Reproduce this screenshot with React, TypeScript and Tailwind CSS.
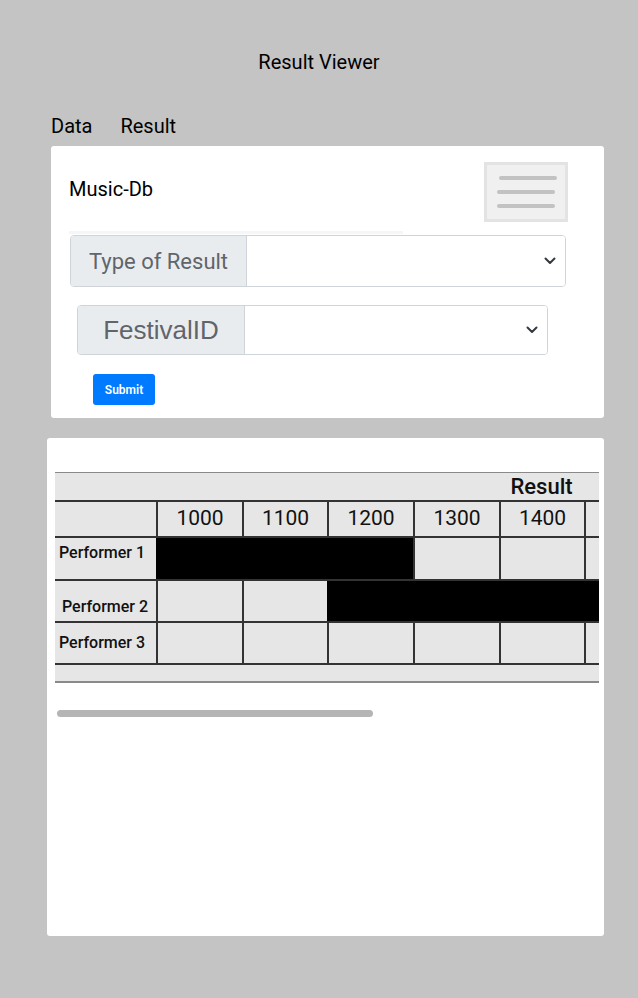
import React from "react"

const Chevron = () => (
    <svg width="12" height="8" viewBox="0 0 12 8" fill="none">
        <path d="M1.5 1.5 L6 6 L10.5 1.5" stroke="#343a40" strokeWidth="2" strokeLinecap="round" strokeLinejoin="round" />
    </svg>
)

const SelectGroup = ({ label, labelW, w, h, labelClass }: { label: string; labelW: string; w: string; h: string; labelClass: string }) => (
    <div className={`flex ${w} ${h} border border-[#ced4da] rounded-[4px] overflow-hidden`}>
        <div className={`${labelW} shrink-0 bg-[#e9ecef] border-r border-[#ced4da] flex items-center justify-center text-[#5f656b] ${labelClass}`}>
            {label}
        </div>
        <div className="flex-1 bg-white flex items-center justify-end pr-[9px]">
            <Chevron />
        </div>
    </div>
)

const Cell = ({ w, black = false, children }: { w: string; black?: boolean; children?: React.ReactNode }) => (
    <div className={`${w} shrink-0 h-full border-l-2 flex items-center justify-center ${black ? "bg-black border-black" : "border-[#333]"}`}>
        {children}
    </div>
)

export default function App() {
    const hours = ["1000", "1100", "1200", "1300", "1400", ""]
    const widths = ["w-[86px]", "w-[85px]", "w-[86px]", "w-[86px]", "w-[85px]", "w-[86px]"]

    return (
        <div className="w-[638px] h-[998px] bg-[#c4c4c4] font-['Roboto',sans-serif] text-black overflow-hidden">
            <div className="pt-[48px] h-[76px] leading-[28px] text-[20px] text-center">Result Viewer</div>

            <div className="mt-[36px] ml-[51px] flex gap-[28px] text-[20px] leading-[28px]">
                <span>Data</span>
                <span>Result</span>
            </div>

            {/* query card */}
            <div className="mt-[6px] ml-[51px] w-[553px] h-[272px] bg-white rounded-[3px]">
                <div className="pt-[16px] flex justify-between">
                    <div className="pl-[18px] pt-[16px] text-[20px] leading-[22px]">Music-Db</div>
                    <div className="mr-[36px] w-[84px] h-[60px] bg-[#f0f0f0] border-[3px] border-[#e3e3e3] flex flex-col items-center justify-center gap-[10px]">
                        <div className="w-[58px] h-[4px] rounded-full bg-[#c2c2c2] ml-[3px]" />
                        <div className="w-[58px] h-[4px] rounded-full bg-[#c2c2c2]" />
                        <div className="w-[58px] h-[4px] rounded-full bg-[#c2c2c2]" />
                    </div>
                </div>
                <div className="mt-[9px] ml-[18px] w-[334px] h-[3px] bg-[#f4f6f8]" />
                <div className="mt-[1px] ml-[19px]">
                    <SelectGroup label="Type of Result" labelW="w-[176px]" w="w-[496px]" h="h-[52px]" labelClass="text-[22px]" />
                </div>
                <div className="mt-[18px] ml-[26px]">
                    <SelectGroup label="FestivalID" labelW="w-[167px]" w="w-[471px]" h="h-[50px]" labelClass="text-[26px] font-['Liberation_Sans',sans-serif]" />
                </div>
                <button className="mt-[19px] ml-[42px] w-[62px] h-[31px] bg-[#007bff] rounded-[3px] text-white text-[12px] font-semibold">
                    Submit
                </button>
            </div>

            {/* result card */}
            <div className="mt-[20px] ml-[47px] w-[557px] h-[498px] bg-white rounded-[3px] pt-[34px]">
                <div className="ml-[8px] w-[544px] overflow-hidden">
                    <div className="w-[615px] bg-[#e6e6e6] text-[#111]">
                        <div className="h-[30px] border-t border-[#8a8a8a] border-b-2 border-b-[#333] flex">
                            <div className="w-[444px] shrink-0" />
                            <div className="w-[85px] text-center text-[22px] font-medium leading-[28px]">Result</div>
                        </div>
                        <div className="h-[36px] border-b-2 border-[#333] flex text-[21px]">
                            <div className="w-[101px] shrink-0" />
                            {hours.map((h, i) => (
                                <Cell key={i} w={widths[i]}>{h}</Cell>
                            ))}
                        </div>
                        <div className="h-[43px] border-b-2 border-[#333] flex">
                            <div className="w-[101px] shrink-0 pl-[4px] pt-[3px] text-[16px] font-medium">Performer 1</div>
                            <Cell w="w-[257px]" black />
                            <Cell w="w-[86px]" />
                            <Cell w="w-[85px]" />
                            <Cell w="w-[86px]" />
                        </div>
                        <div className="h-[42px] border-b-2 border-[#333] flex">
                            <div className="w-[101px] shrink-0 pl-[7px] pt-[14px] text-[16px] font-medium">Performer 2</div>
                            <Cell w="w-[86px]" />
                            <Cell w="w-[85px]" />
                            <Cell w="w-[343px]" black />
                        </div>
                        <div className="h-[42px] border-b-2 border-[#333] flex">
                            <div className="w-[101px] shrink-0 pl-[4px] flex items-center text-[16px] font-medium">Performer 3</div>
                            {widths.map((w, i) => (
                                <Cell key={i} w={w} />
                            ))}
                        </div>
                        <div className="h-[18px] border-b-2 border-[#8a8a8a]" />
                    </div>
                </div>
                <div className="mt-[27px] ml-[10px] w-[316px] h-[7px] rounded-full bg-[#b5b5b5]" />
            </div>
        </div>
    )
}
